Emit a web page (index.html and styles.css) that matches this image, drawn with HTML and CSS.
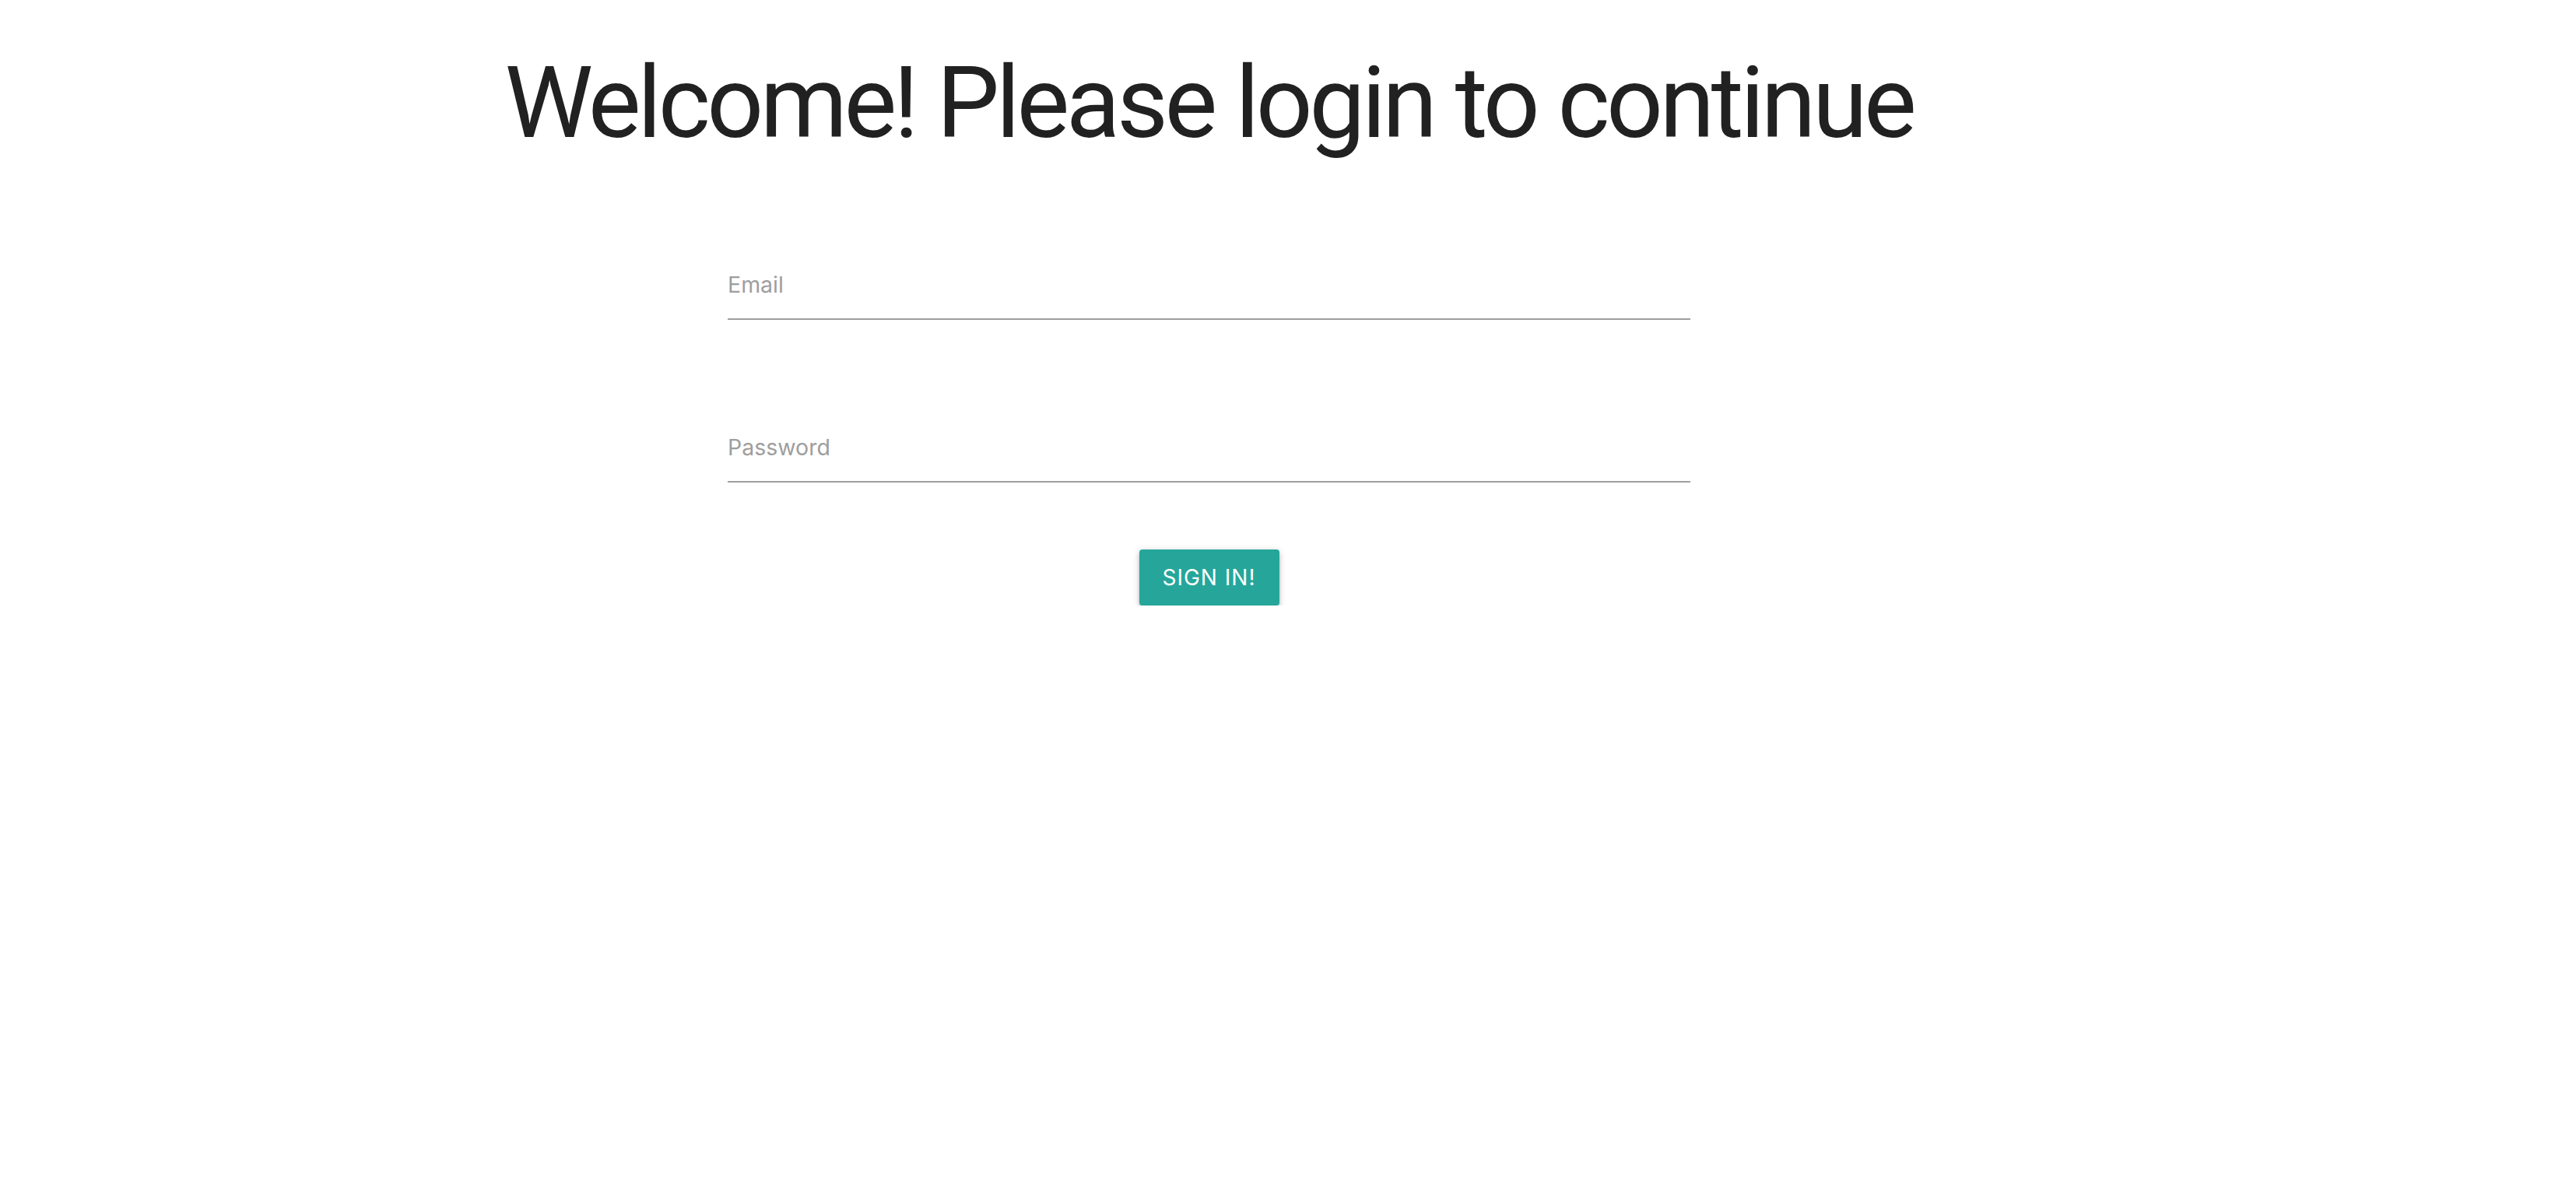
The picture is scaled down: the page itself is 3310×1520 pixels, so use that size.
FILE: index.html
```html
<!DOCTYPE html>
<html lang="en">
<head>
<meta charset="utf-8">
<title>Login</title>
<link rel="stylesheet" href="styles.css">
</head>
<body>
<main class="page">
  <h1 class="title">Welcome! Please login to continue</h1>
  <form class="login-form">
    <div class="field"><span class="field-label">Email</span></div>
    <div class="field"><span class="field-label">Password</span></div>
    <div class="actions"><button type="button" class="btn">SIGN IN!</button></div>
  </form>
</main>
</body>
</html>
```

FILE: styles.css
```css
html, body {
  margin: 0;
  padding: 0;
  background: #ffffff;
}
body {
  font-family: Inter, "Noto Sans", "Liberation Sans", sans-serif;
  color: rgba(0, 0, 0, 0.87);
}
.page {
  width: 3107px;
  display: flex;
  flex-direction: column;
  align-items: center;
}
.title {
  margin: 62px 0 0 0;
  font-family: Roboto, Inter, "Liberation Sans", sans-serif;
  font-size: 128px;
  line-height: 140px;
  font-weight: 400;
  letter-spacing: -4.5px;
  color: #212121;
  white-space: nowrap;
}
.login-form {
  width: 1237px;
  margin-top: 144px;
  display: flex;
  flex-direction: column;
  gap: 144px;
}
.field {
  display: flex;
  flex-direction: column;
  padding-bottom: 23px;
  border-bottom: 2px solid #9e9e9e;
}
.field-label {
  font-size: 28.5px;
  line-height: 40px;
  color: #9e9e9e;
}
.actions {
  display: flex;
  justify-content: center;
  margin-top: -58px;
}
.btn {
  width: 180px;
  height: 72px;
  border: none;
  border-radius: 4px;
  background: #26a69a;
  color: #ffffff;
  font-family: Inter, "Noto Sans", "Liberation Sans", sans-serif;
  font-size: 28px;
  letter-spacing: 1px;
  padding: 0;
  box-shadow: 0 4px 4px 0 rgba(0,0,0,0.14), 0 6px 2px -4px rgba(0,0,0,0.12), 0 2px 10px 0 rgba(0,0,0,0.2);
}
```
